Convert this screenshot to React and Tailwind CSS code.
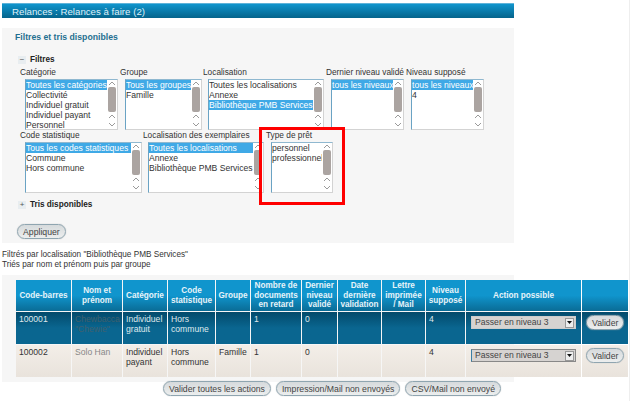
import React from 'react';

const Chevron = ({ up }) => (
  <svg width="8" height="5" viewBox="0 0 8 5" className="block">
    <path d={up ? 'M1 4 L4 1 L7 4' : 'M1 1 L4 4 L7 1'} fill="none" stroke="#9a9a9a" strokeWidth="1" />
  </svg>
);

const ListBox = ({ width, items, selected = [] }) => (
  <div className="flex h-[51px] border border-[#d3d3d3] border-l-[#6aa3c4] border-t-[#8fb8d0] bg-white overflow-hidden text-[8.6px]" style={{ width }}>
    <div className="flex-1 min-w-0 overflow-hidden">
      {items.map((item) => (
        <div
          key={item}
          className={`h-[10px] leading-[10px] whitespace-nowrap overflow-hidden ${selected.includes(item) ? 'bg-[#3fa9e6] text-white' : 'text-[#333]'}`}
        >
          {item}
        </div>
      ))}
    </div>
    <div className="w-[10px] shrink-0 flex flex-col items-center pt-[1px]">
      <Chevron up />
      <div className="w-[8px] h-[25px] mt-[1px] rounded-[2px] bg-[#aba4a1]" />
      <div className="mt-[2px]"><Chevron up /></div>
      <div className="mt-[3px]"><Chevron /></div>
    </div>
  </div>
);

const Field = ({ label, width, boxWidth, items, selected }) => (
  <div className="shrink-0" style={{ width }}>
    <div className="h-[10px] leading-[10px] text-[#333] whitespace-nowrap text-[8.3px]">{label}</div>
    <div className="mt-[2px] ml-[5px]">
      <ListBox width={boxWidth} items={items} selected={selected} />
    </div>
  </div>
);

const PillButton = ({ children, className = '' }) => (
  <button className={`h-[15px] px-[5px] rounded-full border border-[#8fa5b0] bg-gradient-to-b from-[#d6dadc] to-[#eceeee] text-[#444] leading-[12px] text-[8.7px] whitespace-nowrap shadow-[0_0_1px_#aaa] ${className}`}>
    {children}
  </button>
);

const Toggle = ({ sign, label }) => (
  <div className="flex items-center">
    <span className="w-[8px] h-[8px] flex items-center justify-center text-[#555] bg-[#e8edf0] text-[8px] leading-none">{sign}</span>
    <span className="ml-[4px] font-bold text-[#222] text-[8.2px]">{label}</span>
  </div>
);

const columns = [55, 50, 44, 47, 34, 50, 35, 43, 43, 39, 115, 46];
const headers = ['Code-barres', 'Nom et prénom', 'Catégorie', 'Code statistique', 'Groupe', 'Nombre de documents en retard', 'Dernier niveau validé', 'Date dernière validation', 'Lettre imprimée / Mail', 'Niveau supposé', 'Action possible', ''];

const Row = ({ dark, values }) => {
  const cell = `align-top px-[3px] pt-[3px] leading-[9.5px] bg-gradient-to-b ${dark ? 'from-[#034a6b] to-[#0a6690] to-50%' : 'from-[#f3eee8] to-[#e9e3dc]'}`;
  const textColor = dark ? 'text-[#dfe8ec]' : 'text-[#333]';
  const nameColor = dark ? 'text-[#3f606e]' : 'text-[#888]';
  return (
    <tr className="h-[32px]">
      {values.map((v, i) => (
        <td key={i} className={`${cell} ${i === 1 ? nameColor : textColor}`}>{v}</td>
      ))}
      <td className={cell}>
        <div className={`mt-[1px] ml-[2px] h-[13px] w-[105px] flex items-center justify-between pl-[3px] pr-[1px] bg-[#d6d3d1] text-[#444] border ${dark ? 'border-[#ccc]' : 'border-[#888] border-l-[#3a7fa5]'}`}>
          <span>Passer en niveau 3</span>
          <span className="w-[9px] h-[10px] bg-[#eee] border border-[#999] flex items-center justify-center">
            <svg width="5" height="3" viewBox="0 0 5 3"><path d="M0 0 H5 L2.5 3 Z" fill="#111" /></svg>
          </span>
        </div>
      </td>
      <td className={cell}>
        <PillButton className="ml-[1px] px-[4px]">Valider</PillButton>
      </td>
    </tr>
  );
};

export default function App() {
  return (
    <div className="relative w-[630px] h-[401px] overflow-hidden bg-white border-r border-[#eee] text-[8.6px] font-['Liberation_Sans',Arial,sans-serif]">
      <div className="h-[3px]" />
      <div className="ml-[2px] w-[512px] h-[15px] pl-[10px] leading-[15px] text-[#dff0f8] text-[9.7px] border-t border-[#5fb3d9] bg-gradient-to-b from-[#1095cd] to-[#06648c]">
        Relances : Relances à faire (2)
      </div>

      <div className="ml-[2px] mt-[10px] w-[512px] h-[215px] bg-[#f6f6f6] pt-[3px]">
        <div className="ml-[13px] mt-[1px] h-[10px] leading-[10px] font-bold text-[#1f6f90] text-[8.7px]">Filtres et tris disponibles</div>

        <div className="ml-[16px] mt-[12px] h-[11px]"><Toggle sign="−" label="Filtres" /></div>

        <div className="ml-[18px] mt-[2px] flex">
          <Field label="Catégorie" width={100} boxWidth={93} items={['Toutes les catégories', 'Collectivité', 'Individuel gratuit', 'Individuel payant', 'Personnel']} selected={['Toutes les catégories']} />
          <Field label="Groupe" width={83} boxWidth={77} items={['Tous les groupes', 'Famille']} selected={['Tous les groupes']} />
          <Field label="Localisation" width={123} boxWidth={116} items={['Toutes les localisations', 'Annexe', 'Bibliothèque PMB Services']} selected={['Bibliothèque PMB Services']} />
          <Field label="Dernier niveau validé" width={80} boxWidth={73} items={['tous les niveaux']} selected={['tous les niveaux']} />
          <Field label="Niveau supposé" width={80} boxWidth={73} items={['tous les niveaux', '4']} selected={['tous les niveaux']} />
        </div>

        <div className="ml-[18px] flex">
          <Field label="Code statistique" width={123} boxWidth={117} items={['Tous les codes statistiques', 'Commune', 'Hors commune']} selected={['Tous les codes statistiques']} />
          <Field label="Localisation des exemplaires" width={123} boxWidth={116} items={['Toutes les localisations', 'Annexe', 'Bibliothèque PMB Services']} selected={['Toutes les localisations']} />
          <Field label="Type de prêt" width={80} boxWidth={62} items={['personnel', 'professionnel']} />
        </div>

        <div className="ml-[16px] mt-[6px] h-[11px]"><Toggle sign="+" label="Tris disponibles" /></div>

        <div className="ml-[15px] mt-[14px]">
          <PillButton className="px-[4px]">Appliquer</PillButton>
        </div>
      </div>

      <div className="ml-[2px] mt-[7px] leading-[10px] text-[#333] text-[8.2px]">
        <div>Filtrés par localisation "Bibliothèque PMB Services"</div>
        <div>Triés par nom et prénom puis par groupe</div>
      </div>

      <div className="ml-[2px] mt-[5px] w-[512px] h-[107px] bg-[#f6f6f6] pt-[4px] pl-[13px]">
        <table className="w-[613px] table-fixed border-separate border-spacing-[1px]">
          <colgroup>
            {columns.map((w, i) => <col key={i} style={{ width: w }} />)}
          </colgroup>
          <thead>
            <tr className="h-[31px]">
              {headers.map((h, i) => (
                <th key={i} className="px-[2px] leading-[9.5px] font-bold text-center text-[#e6f3f9] text-[8.2px] bg-gradient-to-b from-[#1095cd] from-50% to-[#0a6c96]">{h}</th>
              ))}
            </tr>
          </thead>
          <tbody>
            <Row dark values={['100001', 'Chewbacca "Chewie"', 'Individuel gratuit', 'Hors commune', '', '1', '0', '', '', '4']} />
            <Row values={['100002', 'Solo Han', 'Individuel payant', 'Hors commune', 'Famille', '1', '0', '', '', '4']} />
          </tbody>
        </table>
      </div>

      <div className="-mt-[1px] ml-[163px] flex gap-[5px]">
        <PillButton>Valider toutes les actions</PillButton>
        <PillButton>Impression/Mail non envoyés</PillButton>
        <PillButton>CSV/Mail non envoyé</PillButton>
      </div>

      {/* encadré rouge autour du type de prêt */}
      <div className="absolute left-[259px] top-[127px] w-[86px] h-[78px] border-[3px] border-[#f00]" />
    </div>
  );
}
